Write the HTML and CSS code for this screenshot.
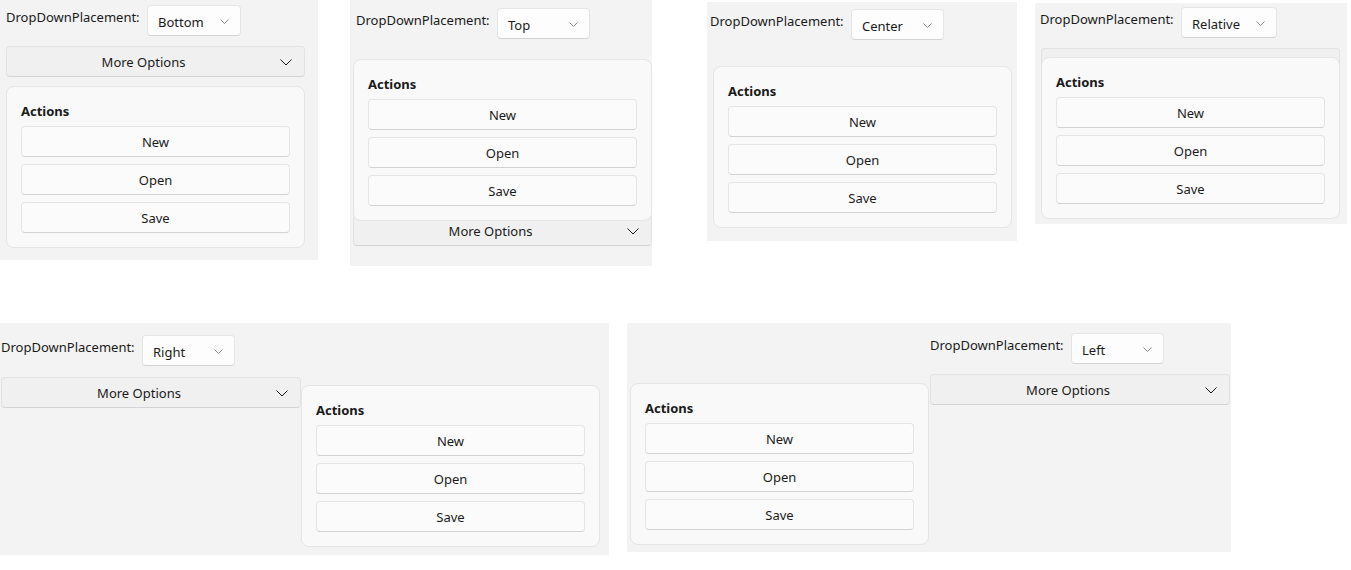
FILE: index.html
```html
<!DOCTYPE html>
<html lang="en">
<head>
<meta charset="utf-8">
<title>DropDownPlacement</title>
<link rel="stylesheet" href="styles.css">
</head>
<body>
<div class="canvas">
  <div class="row">
    <section class="panel panel-bottom">
      <div class="picker">
        <span class="picker-label">DropDownPlacement:</span>
        <div class="combo"><span class="combo-value">Bottom</span><svg class="combo-chev" viewBox="0 0 9 5"><path d="M0.5 0.5 L4.5 4.5 L8.5 0.5"/></svg></div>
      </div>
      <div class="anchor">
        <div class="dropbtn"><span class="dropbtn-text">More Options</span><svg class="dropbtn-chev" viewBox="0 0 12 7"><path d="M0.5 0.5 L6 6 L11.5 0.5"/></svg></div>
        <div class="flyout flyout-bottom">
          <div class="flyout-title">Actions</div>
          <div class="action">New</div>
          <div class="action">Open</div>
          <div class="action">Save</div>
        </div>
      </div>
    </section>

    <section class="panel panel-top">
      <div class="picker">
        <span class="picker-label">DropDownPlacement:</span>
        <div class="combo"><span class="combo-value">Top</span><svg class="combo-chev" viewBox="0 0 9 5"><path d="M0.5 0.5 L4.5 4.5 L8.5 0.5"/></svg></div>
      </div>
      <div class="anchor">
        <div class="dropbtn"><span class="dropbtn-text">More Options</span><svg class="dropbtn-chev" viewBox="0 0 12 7"><path d="M0.5 0.5 L6 6 L11.5 0.5"/></svg></div>
        <div class="flyout flyout-top">
          <div class="flyout-title">Actions</div>
          <div class="action">New</div>
          <div class="action">Open</div>
          <div class="action">Save</div>
        </div>
      </div>
    </section>

    <section class="panel panel-center">
      <div class="picker">
        <span class="picker-label">DropDownPlacement:</span>
        <div class="combo"><span class="combo-value">Center</span><svg class="combo-chev" viewBox="0 0 9 5"><path d="M0.5 0.5 L4.5 4.5 L8.5 0.5"/></svg></div>
      </div>
      <div class="anchor">
        <div class="dropbtn dropbtn-covered"><span class="dropbtn-text">More Options</span><svg class="dropbtn-chev" viewBox="0 0 12 7"><path d="M0.5 0.5 L6 6 L11.5 0.5"/></svg></div>
        <div class="flyout flyout-center">
          <div class="flyout-title">Actions</div>
          <div class="action">New</div>
          <div class="action">Open</div>
          <div class="action">Save</div>
        </div>
      </div>
    </section>

    <section class="panel panel-relative">
      <div class="picker">
        <span class="picker-label">DropDownPlacement:</span>
        <div class="combo"><span class="combo-value">Relative</span><svg class="combo-chev" viewBox="0 0 9 5"><path d="M0.5 0.5 L4.5 4.5 L8.5 0.5"/></svg></div>
      </div>
      <div class="anchor">
        <div class="dropbtn"><span class="dropbtn-text">More Options</span><svg class="dropbtn-chev" viewBox="0 0 12 7"><path d="M0.5 0.5 L6 6 L11.5 0.5"/></svg></div>
        <div class="flyout flyout-relative">
          <div class="flyout-title">Actions</div>
          <div class="action">New</div>
          <div class="action">Open</div>
          <div class="action">Save</div>
        </div>
      </div>
    </section>
  </div>

  <div class="row">
    <section class="panel panel-right">
      <div class="picker">
        <span class="picker-label">DropDownPlacement:</span>
        <div class="combo"><span class="combo-value">Right</span><svg class="combo-chev" viewBox="0 0 9 5"><path d="M0.5 0.5 L4.5 4.5 L8.5 0.5"/></svg></div>
      </div>
      <div class="anchor">
        <div class="dropbtn"><span class="dropbtn-text">More Options</span><svg class="dropbtn-chev" viewBox="0 0 12 7"><path d="M0.5 0.5 L6 6 L11.5 0.5"/></svg></div>
        <div class="flyout flyout-right">
          <div class="flyout-title">Actions</div>
          <div class="action">New</div>
          <div class="action">Open</div>
          <div class="action">Save</div>
        </div>
      </div>
    </section>

    <section class="panel panel-left">
      <div class="picker">
        <span class="picker-label">DropDownPlacement:</span>
        <div class="combo"><span class="combo-value">Left</span><svg class="combo-chev" viewBox="0 0 9 5"><path d="M0.5 0.5 L4.5 4.5 L8.5 0.5"/></svg></div>
      </div>
      <div class="anchor">
        <div class="dropbtn"><span class="dropbtn-text">More Options</span><svg class="dropbtn-chev" viewBox="0 0 12 7"><path d="M0.5 0.5 L6 6 L11.5 0.5"/></svg></div>
        <div class="flyout flyout-left">
          <div class="flyout-title">Actions</div>
          <div class="action">New</div>
          <div class="action">Open</div>
          <div class="action">Save</div>
        </div>
      </div>
    </section>
  </div>
</div>
</body>
</html>
```

FILE: styles.css
```css
body {
  margin: 0;
  background: #ffffff;
  font-family: "Noto Sans", "Open Sans", sans-serif;
  font-size: 13px;
  color: #1a1a1a;
}

.canvas {
  display: flex;
  flex-direction: column;
  gap: 57px;
  width: 1351px;
}

.row {
  display: flex;
  align-items: flex-start;
}

.panel {
  box-sizing: border-box;
  display: flex;
  flex-direction: column;
  align-items: flex-start;
  background: #f3f3f3;
  overflow: hidden;
}

/* picker row */
.picker {
  display: flex;
  align-items: flex-start;
}

.picker-label {
  flex-shrink: 0;
  width: 141px;
  margin-top: 2px;
  line-height: 20px;
  white-space: nowrap;
}

.combo {
  box-sizing: border-box;
  display: flex;
  align-items: center;
  gap: 16px;
  min-width: 93px;
  height: 31px;
  padding: 2px 11px 0 10px;
  background: #fdfdfd;
  border: 1px solid #e5e5e5;
  border-bottom-color: #d3d3d3;
  border-radius: 4px;
}

.combo-value {
  flex: 1;
  line-height: 20px;
}

.combo-chev {
  width: 9px;
  height: 5px;
  fill: none;
  stroke: #8a8a8a;
  stroke-width: 1;
}

/* drop down button + flyout */
.anchor {
  position: relative;
  width: 299px;
}

.dropbtn {
  box-sizing: border-box;
  display: flex;
  align-items: center;
  height: 31px;
  padding-right: 12px;
  background: #f0f0f0;
  border: 1px solid #e2e2e2;
  border-bottom-color: #d4d4d4;
  border-radius: 4px;
}

.dropbtn-text {
  flex: 1;
  text-align: center;
  line-height: 20px;
}

.dropbtn-covered .dropbtn-text {
  visibility: hidden;
}

.dropbtn-chev {
  width: 12px;
  height: 7px;
  margin-top: 2px;
  fill: none;
  stroke: #1a1a1a;
  stroke-width: 1;
}

.flyout {
  position: absolute;
  z-index: 1;
  box-sizing: border-box;
  width: 299px;
  padding: 14px;
  background: #f9f9f9;
  border: 1px solid #e5e5e5;
  border-radius: 8px;
}

.flyout-title {
  font-weight: 700;
  line-height: 20px;
  margin-bottom: 5px;
}

.action {
  box-sizing: border-box;
  display: flex;
  align-items: center;
  justify-content: center;
  height: 31px;
  line-height: 20px;
  background: #fbfbfb;
  border: 1px solid #e5e5e5;
  border-bottom-color: #d2d2d2;
  border-radius: 4px;
}

.action + .action {
  margin-top: 7px;
}

/* flyout placements */
.flyout-bottom { top: 40px; left: 0; }
.flyout-top { bottom: 25px; left: 0; }
.flyout-center { top: -65px; left: 0; }
.flyout-relative { top: 9px; left: 0; }
.flyout-right { top: 8px; left: 100%; }
.flyout-left { top: 9px; right: calc(100% + 1px); }

/* individual panels */
.panel-bottom {
  width: 318px;
  height: 260px;
  padding: 5px 0 0 6px;
}
.panel-bottom .anchor { margin-top: 10px; }

.panel-top {
  width: 302px;
  height: 266px;
  margin-left: 32px;
  padding: 8px 0 0 6px;
}
.panel-top .anchor { margin: 176px 0 0 -3px; }

.panel-center {
  width: 310px;
  height: 239px;
  margin: 2px 0 0 55px;
  padding: 7px 0 0 3px;
}
.panel-center .anchor { margin: 91px 0 0 3px; }

.panel-relative {
  width: 312px;
  height: 221px;
  margin: 3px 0 0 18px;
  padding: 4px 0 0 5px;
}
.panel-relative .anchor { margin: 10px 0 0 1px; }

.panel-right {
  width: 609px;
  height: 232px;
  padding: 12px 0 0 1px;
}
.panel-right .anchor {
  width: 300px;
  margin-top: 11px;
}

.panel-left {
  width: 604px;
  height: 229px;
  margin-left: 18px;
  padding: 10px 0 0 303px;
}
.panel-left .anchor {
  width: 300px;
  margin-top: 10px;
}
```
